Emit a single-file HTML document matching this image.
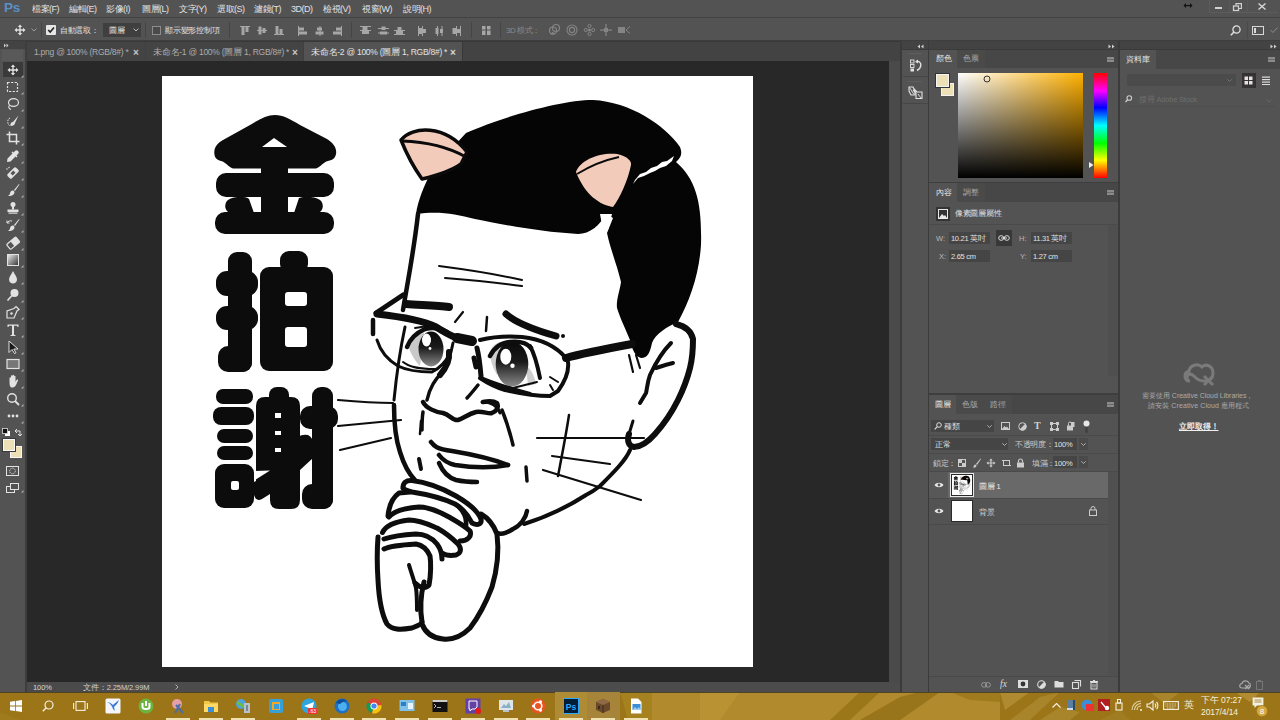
<!DOCTYPE html>
<html><head><meta charset="utf-8">
<style>
*{margin:0;padding:0;box-sizing:border-box}
html,body{width:1280px;height:720px;overflow:hidden;background:#535353;font-family:"Liberation Sans",sans-serif;color:#ddd;position:relative}
.a{position:absolute}
.t{position:absolute;white-space:nowrap;line-height:1}
svg{position:absolute;overflow:visible}
</style></head><body>
<div class="a" style="left:0px;top:0px;width:1280px;height:18px;background:#535353;"></div>
<div class="a" style="left:0px;top:17px;width:1280px;height:1px;background:#434343;"></div>
<div class="a" style="left:0px;top:18px;width:1280px;height:23px;background:#535353;"></div>
<div class="a" style="left:0px;top:40px;width:1280px;height:1px;background:#3e3e3e;"></div>
<div class="a" style="left:0px;top:41px;width:25px;height:651px;background:#535353;"></div>
<div class="a" style="left:0px;top:41px;width:25px;height:8px;background:#434343;"></div>
<div class="a" style="left:2px;top:50px;width:21px;height:11px;background:#595959;"></div>
<div class="a" style="left:25px;top:41px;width:2px;height:651px;background:#3d3d3d;"></div>
<div class="a" style="left:27px;top:41px;width:873px;height:20px;background:#434343;"></div>
<div class="a" style="left:27px;top:41px;width:873px;height:1px;background:#393939;"></div>
<div class="a" style="left:27px;top:61px;width:862px;height:621px;background:#282828;"></div>
<div class="a" style="left:162px;top:76px;width:591px;height:591px;background:#ffffff;"></div>
<div class="a" style="left:889px;top:61px;width:11px;height:621px;background:#4a4a4a;"></div>
<div class="a" style="left:27px;top:682px;width:873px;height:10px;background:#4c4c4c;"></div>
<div class="a" style="left:900px;top:41px;width:2px;height:651px;background:#3b3b3b;"></div>
<div class="a" style="left:902px;top:41px;width:26px;height:651px;background:#535353;"></div>
<div class="a" style="left:902px;top:41px;width:26px;height:9px;background:#434343;"></div>
<div class="a" style="left:902px;top:49px;width:26px;height:1px;background:#3a3a3a;"></div>
<div class="a" style="left:928px;top:41px;width:1px;height:651px;background:#3b3b3b;"></div>
<div class="a" style="left:929px;top:41px;width:190px;height:651px;background:#535353;"></div>
<div class="a" style="left:929px;top:41px;width:190px;height:9px;background:#434343;"></div>
<div class="a" style="left:929px;top:49px;width:190px;height:1px;background:#3a3a3a;"></div>
<div class="a" style="left:1118px;top:41px;width:2px;height:651px;background:#3b3b3b;"></div>
<div class="a" style="left:1120px;top:41px;width:160px;height:651px;background:#535353;"></div>
<div class="a" style="left:1120px;top:41px;width:160px;height:9px;background:#434343;"></div>
<div class="a" style="left:1120px;top:49px;width:160px;height:1px;background:#3a3a3a;"></div>
<span class="t" style="left:4px;top:1px;font-size:13.5px;color:#5a8fc8;font-weight:bold;letter-spacing:-0.3px">Ps</span>
<span class="t" style="left:32px;top:4.5px;font-size:9px;color:#e2e2e2;letter-spacing:-0.5px;">檔案(F)</span>
<span class="t" style="left:69px;top:4.5px;font-size:9px;color:#e2e2e2;letter-spacing:-0.5px;">編輯(E)</span>
<span class="t" style="left:106px;top:4.5px;font-size:9px;color:#e2e2e2;letter-spacing:-0.5px;">影像(I)</span>
<span class="t" style="left:142px;top:4.5px;font-size:9px;color:#e2e2e2;letter-spacing:-0.5px;">圖層(L)</span>
<span class="t" style="left:179px;top:4.5px;font-size:9px;color:#e2e2e2;letter-spacing:-0.5px;">文字(Y)</span>
<span class="t" style="left:217px;top:4.5px;font-size:9px;color:#e2e2e2;letter-spacing:-0.5px;">選取(S)</span>
<span class="t" style="left:254px;top:4.5px;font-size:9px;color:#e2e2e2;letter-spacing:-0.5px;">濾鏡(T)</span>
<span class="t" style="left:291px;top:4.5px;font-size:9px;color:#e2e2e2;letter-spacing:-0.5px;">3D(D)</span>
<span class="t" style="left:323px;top:4.5px;font-size:9px;color:#e2e2e2;letter-spacing:-0.5px;">檢視(V)</span>
<span class="t" style="left:362px;top:4.5px;font-size:9px;color:#e2e2e2;letter-spacing:-0.5px;">視窗(W)</span>
<span class="t" style="left:403px;top:4.5px;font-size:9px;color:#e2e2e2;letter-spacing:-0.5px;">說明(H)</span>
<svg style="left:1183px;top:2px" width="10" height="7" viewBox="0 0 10 7"><path d="M0.5 3.5 L3 1 L3 6 Z M9.5 3.5 L7 1 L7 6 Z" fill="#111"/><rect x="2.5" y="3" width="5" height="1.2" fill="#111"/></svg>
<div class="a" style="left:1209px;top:0px;width:1px;height:13px;background:#5c5c5c;"></div>
<div class="a" style="left:1209px;top:12px;width:69px;height:1px;background:#5c5c5c;"></div>
<div class="a" style="left:1229px;top:0px;width:1px;height:12px;background:#595959;"></div>
<div class="a" style="left:1247px;top:0px;width:1px;height:12px;background:#595959;"></div>
<div class="a" style="left:1215px;top:7px;width:7px;height:2px;background:#d0d0d0;"></div>
<svg style="left:1233px;top:3px" width="9" height="8" viewBox="0 0 9 8"><rect x="0.5" y="3" width="5" height="4.5" fill="none" stroke="#d0d0d0" stroke-width="1.3"/><path d="M3 2.5 V0.6 H8.4 V5.5 H6" fill="none" stroke="#d0d0d0" stroke-width="1.2"/></svg>
<svg style="left:1258px;top:3px" width="8" height="7" viewBox="0 0 8 7"><path d="M0.5 0.5 L7.5 6.5 M7.5 0.5 L0.5 6.5" stroke="#d8d8d8" stroke-width="1.4"/></svg>
<svg style="left:14px;top:24px" width="12" height="12" viewBox="0 0 12 12"><path d="M6 0.5 L8.2 3 L6.7 3 L6.7 5.3 L9 5.3 L9 3.8 L11.5 6 L9 8.2 L9 6.7 L6.7 6.7 L6.7 9 L8.2 9 L6 11.5 L3.8 9 L5.3 9 L5.3 6.7 L3 6.7 L3 8.2 L0.5 6 L3 3.8 L3 5.3 L5.3 5.3 L5.3 3 L3.8 3 Z" fill="#e0e0e0"/></svg>
<svg style="left:31px;top:28px" width="6" height="4" viewBox="0 0 6 4"><path d="M0.5 0.5 L3 3 L5.5 0.5" fill="none" stroke="#9a9a9a" stroke-width="1"/></svg>
<div class="a" style="left:41px;top:22px;width:1px;height:16px;background:#454545;"></div>
<div class="a" style="left:46px;top:25px;width:10px;height:10px;background:#e6e6e6;border-radius:1px"></div>
<svg style="left:47px;top:26px" width="8" height="8" viewBox="0 0 8 8"><path d="M1.2 4 L3.2 6 L7 1.6" fill="none" stroke="#222" stroke-width="1.6"/></svg>
<span class="t" style="left:60px;top:26.5px;font-size:8px;color:#e0e0e0;letter-spacing:-0.3px;">自動選取：</span>
<div class="a" style="left:103px;top:23px;width:38px;height:14px;background:#3f3f3f;"></div>
<span class="t" style="left:109px;top:27px;font-size:8px;color:#e8e8e8;letter-spacing:-0.3px;">圖層</span>
<svg style="left:133px;top:28px" width="6" height="4" viewBox="0 0 6 4"><path d="M0.5 0.5 L3 3 L5.5 0.5" fill="none" stroke="#bbb" stroke-width="1"/></svg>
<div class="a" style="left:145px;top:22px;width:1px;height:16px;background:#454545;"></div>
<div class="a" style="left:152px;top:26px;width:9px;height:9px;background:#4a4a4a;border:1px solid #8c8c8c"></div>
<span class="t" style="left:165px;top:26.5px;font-size:8px;color:#e0e0e0;letter-spacing:-0.2px;">顯示變形控制項</span>
<div class="a" style="left:229px;top:22px;width:1px;height:16px;background:#454545;"></div>
<svg style="left:240px;top:26px" width="10" height="9" viewBox="0 0 10 9"><rect x="0" y="0" width="10" height="1" fill="#a6a6a6"/><rect x="1.5" y="1" width="3" height="8" fill="#a6a6a6"/><rect x="5.5" y="1" width="3" height="5" fill="#a6a6a6"/></svg>
<svg style="left:257px;top:26px" width="10" height="9" viewBox="0 0 10 9"><rect x="0" y="4" width="10" height="1" fill="#a6a6a6"/><rect x="1.5" y="0.5" width="3" height="8" fill="#a6a6a6"/><rect x="5.5" y="2" width="3" height="5" fill="#a6a6a6"/></svg>
<svg style="left:274px;top:26px" width="10" height="9" viewBox="0 0 10 9"><rect x="0" y="8" width="10" height="1" fill="#a6a6a6"/><rect x="1.5" y="0" width="3" height="8" fill="#a6a6a6"/><rect x="5.5" y="3" width="3" height="5" fill="#a6a6a6"/></svg>
<svg style="left:298px;top:26px" width="10" height="9" viewBox="0 0 10 9"><rect x="0" y="0" width="1" height="10" fill="#a6a6a6"/><rect x="1" y="1.5" width="5" height="3" fill="#a6a6a6"/><rect x="1" y="5.5" width="8" height="3" fill="#a6a6a6"/></svg>
<svg style="left:315px;top:26px" width="10" height="9" viewBox="0 0 10 9"><rect x="4.5" y="0" width="1" height="10" fill="#a6a6a6"/><rect x="2" y="1.5" width="5" height="3" fill="#a6a6a6"/><rect x="0.5" y="5.5" width="8" height="3" fill="#a6a6a6"/></svg>
<svg style="left:332px;top:26px" width="10" height="9" viewBox="0 0 10 9"><rect x="9" y="0" width="1" height="10" fill="#a6a6a6"/><rect x="4" y="1.5" width="5" height="3" fill="#a6a6a6"/><rect x="1" y="5.5" width="8" height="3" fill="#a6a6a6"/></svg>
<div class="a" style="left:351px;top:22px;width:1px;height:16px;background:#454545;"></div>
<svg style="left:360px;top:26px" width="11" height="9" viewBox="0 0 11 9"><rect x="0" y="0" width="11" height="1" fill="#a6a6a6"/><rect x="0" y="4" width="11" height="1" fill="#a6a6a6"/><rect x="2.5" y="1" width="5" height="3" fill="#a6a6a6"/><rect x="2" y="5" width="7" height="3" fill="#a6a6a6"/></svg>
<svg style="left:378px;top:26px" width="11" height="9" viewBox="0 0 11 9"><rect x="0" y="2" width="11" height="1" fill="#a6a6a6"/><rect x="0" y="6.5" width="11" height="1" fill="#a6a6a6"/><rect x="3.5" y="0.5" width="4" height="3.5" fill="#a6a6a6"/><rect x="2" y="5.5" width="7" height="3" fill="#a6a6a6"/></svg>
<svg style="left:394px;top:26px" width="11" height="9" viewBox="0 0 11 9"><rect x="0" y="4" width="11" height="1" fill="#a6a6a6"/><rect x="0" y="8" width="11" height="1" fill="#a6a6a6"/><rect x="3.5" y="1" width="4" height="3" fill="#a6a6a6"/><rect x="2" y="5" width="7" height="3" fill="#a6a6a6"/></svg>
<svg style="left:418px;top:26px" width="9" height="10" viewBox="0 0 9 10"><rect x="0" y="0" width="1" height="10" fill="#a6a6a6"/><rect x="4" y="0" width="1" height="10" fill="#a6a6a6"/><rect x="1" y="2" width="3" height="6" fill="#a6a6a6"/><rect x="5" y="3" width="3" height="4" fill="#a6a6a6"/></svg>
<svg style="left:435px;top:26px" width="9" height="10" viewBox="0 0 9 10"><rect x="2" y="0" width="1" height="10" fill="#a6a6a6"/><rect x="6.5" y="0" width="1" height="10" fill="#a6a6a6"/><rect x="0.5" y="2" width="3" height="6" fill="#a6a6a6"/><rect x="5" y="3" width="3" height="4" fill="#a6a6a6"/></svg>
<svg style="left:452px;top:26px" width="9" height="10" viewBox="0 0 9 10"><rect x="4" y="0" width="1" height="10" fill="#a6a6a6"/><rect x="8" y="0" width="1" height="10" fill="#a6a6a6"/><rect x="0.5" y="2" width="3.5" height="6" fill="#a6a6a6"/><rect x="5" y="3" width="3" height="4" fill="#a6a6a6"/></svg>
<div class="a" style="left:471px;top:22px;width:1px;height:16px;background:#454545;"></div>
<svg style="left:482px;top:25px" width="9" height="10" viewBox="0 0 9 10"><rect x="0" y="1" width="3.5" height="9" fill="#a6a6a6"/><rect x="5" y="1" width="3.5" height="9" fill="#a6a6a6"/><rect x="0" y="4.5" width="9" height="1" fill="#535353"/></svg>
<div class="a" style="left:500px;top:22px;width:1px;height:16px;background:#454545;"></div>
<span class="t" style="left:506px;top:27px;font-size:8px;color:#8a8a8a;letter-spacing:-0.4px;">3D 模式：</span>
<svg style="left:548px;top:24px" width="13" height="11" viewBox="0 0 13 11"><circle cx="8" cy="4" r="3.5" fill="none" stroke="#858585" stroke-width="1.2"/><circle cx="5" cy="6.5" r="3.5" fill="none" stroke="#858585" stroke-width="1.2"/><path d="M2 10.5 L5 7.5 L7 10.5Z" fill="#858585"/></svg>
<svg style="left:566px;top:24px" width="12" height="12" viewBox="0 0 12 12"><circle cx="6" cy="6" r="5" fill="none" stroke="#858585" stroke-width="1.1"/><circle cx="6" cy="6" r="2.6" fill="none" stroke="#858585" stroke-width="1.1"/></svg>
<svg style="left:584px;top:24px" width="11" height="12" viewBox="0 0 11 12"><circle cx="5.5" cy="2" r="1.6" fill="none" stroke="#858585"/><circle cx="5.5" cy="10" r="1.6" fill="none" stroke="#858585"/><circle cx="1.8" cy="6" r="1.6" fill="none" stroke="#858585"/><circle cx="9.2" cy="6" r="1.6" fill="none" stroke="#858585"/><circle cx="5.5" cy="6" r="1.5" fill="#858585"/></svg>
<svg style="left:600px;top:24px" width="12" height="12" viewBox="0 0 12 12"><rect x="4" y="4" width="4" height="4" fill="#858585"/><rect x="0" y="5.5" width="12" height="1.2" fill="#858585"/><rect x="5.4" y="0" width="1.2" height="12" fill="#858585"/></svg>
<svg style="left:618px;top:25px" width="12" height="9" viewBox="0 0 12 9"><rect x="0" y="2" width="7" height="6" fill="#858585"/><path d="M8 5 L12 1.5 M8 5 L12 8.5" stroke="#858585" stroke-width="1"/></svg>
<svg style="left:1230px;top:25px" width="11" height="11" viewBox="0 0 11 11"><circle cx="6.5" cy="4.5" r="3.6" fill="none" stroke="#e0e0e0" stroke-width="1.3"/><path d="M4 7 L0.8 10.2" stroke="#e0e0e0" stroke-width="1.6"/></svg>
<div class="a" style="left:1247px;top:22px;width:1px;height:17px;background:#4a4a4a;"></div>
<div class="a" style="left:1252px;top:26px;width:12px;height:9px;background:none;border:1.3px solid #d8d8d8"></div>
<div class="a" style="left:1254px;top:28px;width:2px;height:5px;background:#d8d8d8;"></div>
<svg style="left:1270px;top:27px" width="8" height="6" viewBox="0 0 8 6"><path d="M0.5 3 L3 5.5 L7.5 0.5" fill="none" stroke="#8a8a8a" stroke-width="1"/></svg>
<div class="a" style="left:27px;top:42px;width:118px;height:19px;background:#444444;"></div>
<div class="a" style="left:145px;top:42px;width:1px;height:19px;background:#404040;"></div>
<span class="t" style="left:34px;top:48px;font-size:8.5px;color:#acacac;letter-spacing:-0.25px;">1.png @ 100% (RGB/8#) *</span>
<span class="t" style="left:133px;top:47.5px;font-size:10px;color:#c8c8c8;font-weight:bold">×</span>
<div class="a" style="left:146px;top:42px;width:157px;height:19px;background:#444444;"></div>
<div class="a" style="left:303px;top:42px;width:1px;height:19px;background:#404040;"></div>
<span class="t" style="left:153px;top:48px;font-size:8.5px;color:#acacac;letter-spacing:-0.25px;">未命名-1 @ 100% (圖層 1, RGB/8#) *</span>
<span class="t" style="left:292px;top:47.5px;font-size:10px;color:#c8c8c8;font-weight:bold">×</span>
<div class="a" style="left:304px;top:42px;width:158px;height:19px;background:#535353;"></div>
<span class="t" style="left:311px;top:48px;font-size:8.5px;color:#e4e4e4;letter-spacing:-0.25px;">未命名-2 @ 100% (圖層 1, RGB/8#) *</span>
<span class="t" style="left:450px;top:47.5px;font-size:10px;color:#d8d8d8;font-weight:bold">×</span>
<div class="a" style="left:462px;top:42px;width:1px;height:19px;background:#383838;"></div>
<svg style="left:4px;top:43px" width="5" height="5" viewBox="0 0 5 5"><path d="M0 0.5 L2 2.5 L0 4.5Z M2.5 0.5 L4.5 2.5 L2.5 4.5Z" fill="#cfcfcf"/></svg>
<div class="a" style="left:3px;top:62px;width:20px;height:15px;background:#3a3a3a;"></div>
<svg style="left:5.5px;top:63.0px" width="14" height="14" viewBox="0 0 14 14"><path transform="translate(1,1)" d="M6 0.5 L8.2 3 L6.7 3 L6.7 5.3 L9 5.3 L9 3.8 L11.5 6 L9 8.2 L9 6.7 L6.7 6.7 L6.7 9 L8.2 9 L6 11.5 L3.8 9 L5.3 9 L5.3 6.7 L3 6.7 L3 8.2 L0.5 6 L3 3.8 L3 5.3 L5.3 5.3 L5.3 3 L3.8 3 Z" fill="#e2e2e2"/></svg>
<svg style="left:20.5px;top:74.5px" width="2.5" height="2.5" viewBox="0 0 2.5 2.5"><path d="M2.5 0 L2.5 2.5 L0 2.5Z" fill="#b0b0b0"/></svg>
<svg style="left:5.5px;top:80.0px" width="14" height="14" viewBox="0 0 14 14"><rect x="1.5" y="2.5" width="10" height="9" fill="none" stroke="#e2e2e2" stroke-width="1.2" stroke-dasharray="2.2 1.4"/></svg>
<svg style="left:20.5px;top:91.5px" width="2.5" height="2.5" viewBox="0 0 2.5 2.5"><path d="M2.5 0 L2.5 2.5 L0 2.5Z" fill="#b0b0b0"/></svg>
<svg style="left:5.5px;top:97.0px" width="14" height="14" viewBox="0 0 14 14"><ellipse cx="7.5" cy="5.5" rx="5" ry="3.8" fill="none" stroke="#e2e2e2" stroke-width="1.2"/><path d="M3.5 8 C2 10 3 12 5 12.5" fill="none" stroke="#e2e2e2" stroke-width="1.1"/></svg>
<svg style="left:20.5px;top:108.5px" width="2.5" height="2.5" viewBox="0 0 2.5 2.5"><path d="M2.5 0 L2.5 2.5 L0 2.5Z" fill="#b0b0b0"/></svg>
<svg style="left:5.5px;top:114.0px" width="14" height="14" viewBox="0 0 14 14"><path d="M4 4 C1 5 1 10 4 12" fill="none" stroke="#e2e2e2" stroke-width="1" stroke-dasharray="1.5 1"/><path d="M12.5 1.5 L7 8 C5 8 4 10 4.5 12 C7 12 9 11 9 9 Z" fill="#e2e2e2"/></svg>
<svg style="left:20.5px;top:125.5px" width="2.5" height="2.5" viewBox="0 0 2.5 2.5"><path d="M2.5 0 L2.5 2.5 L0 2.5Z" fill="#b0b0b0"/></svg>
<svg style="left:5.5px;top:131.0px" width="14" height="14" viewBox="0 0 14 14"><path d="M3.5 0.5 V10.5 H13.5 M0.5 3.5 H10.5 V13.5" fill="none" stroke="#e2e2e2" stroke-width="1.5"/></svg>
<svg style="left:20.5px;top:142.5px" width="2.5" height="2.5" viewBox="0 0 2.5 2.5"><path d="M2.5 0 L2.5 2.5 L0 2.5Z" fill="#b0b0b0"/></svg>
<svg style="left:5.5px;top:149.0px" width="14" height="14" viewBox="0 0 14 14"><path d="M12 2 C11 1 10 1 9 2 L7.5 3.5 L6.5 2.5 L5.5 3.5 L6.5 4.5 L1.5 9.5 L1 13 L4.5 12.5 L9.5 7.5 L10.5 8.5 L11.5 7.5 L10.5 6.5 L12 5 C13 4 13 3 12 2Z" fill="#e2e2e2"/></svg>
<svg style="left:20.5px;top:160.5px" width="2.5" height="2.5" viewBox="0 0 2.5 2.5"><path d="M2.5 0 L2.5 2.5 L0 2.5Z" fill="#b0b0b0"/></svg>
<svg style="left:5.5px;top:166.0px" width="14" height="14" viewBox="0 0 14 14"><g transform="rotate(-45 7 7)"><rect x="1" y="4" width="12" height="6" rx="1.5" fill="#e2e2e2"/><rect x="5" y="5.5" width="4" height="3" fill="#535353"/></g><path d="M2 2 L4 1 M1 4 L1 2" stroke="#e2e2e2" stroke-width="0.8"/></svg>
<svg style="left:20.5px;top:177.5px" width="2.5" height="2.5" viewBox="0 0 2.5 2.5"><path d="M2.5 0 L2.5 2.5 L0 2.5Z" fill="#b0b0b0"/></svg>
<svg style="left:5.5px;top:183.0px" width="14" height="14" viewBox="0 0 14 14"><path d="M13 1 L8 7 L9 8 L13.5 1.5Z" fill="#e2e2e2"/><path d="M7.5 7.5 C5.5 7 4 8.5 4 10.5 C3.5 12 2.5 12.5 2 13 C5 13.5 8.5 12 8.5 9 Z" fill="#e2e2e2"/></svg>
<svg style="left:20.5px;top:194.5px" width="2.5" height="2.5" viewBox="0 0 2.5 2.5"><path d="M2.5 0 L2.5 2.5 L0 2.5Z" fill="#b0b0b0"/></svg>
<svg style="left:5.5px;top:201.0px" width="14" height="14" viewBox="0 0 14 14"><circle cx="7" cy="3.5" r="2.5" fill="#e2e2e2"/><rect x="6" y="5" width="2" height="3.5" fill="#e2e2e2"/><rect x="1.5" y="8.5" width="11" height="2.5" fill="#e2e2e2"/><rect x="2.5" y="11.5" width="9" height="1.2" fill="#e2e2e2"/></svg>
<svg style="left:20.5px;top:212.5px" width="2.5" height="2.5" viewBox="0 0 2.5 2.5"><path d="M2.5 0 L2.5 2.5 L0 2.5Z" fill="#b0b0b0"/></svg>
<svg style="left:5.5px;top:218.0px" width="14" height="14" viewBox="0 0 14 14"><path d="M13 1 L8 7 L9 8 L13.5 1.5Z" fill="#e2e2e2"/><path d="M7.5 7.5 C5.5 7 4 8.5 4 10.5 C3.5 12 2.5 12.5 2 13 C5 13.5 8.5 12 8.5 9 Z" fill="#e2e2e2"/><path d="M1 5 C2 3 4 2.5 6 3 M1 5 L1 2.5 M1 5 L3.5 5" fill="none" stroke="#e2e2e2" stroke-width="1"/></svg>
<svg style="left:20.5px;top:229.5px" width="2.5" height="2.5" viewBox="0 0 2.5 2.5"><path d="M2.5 0 L2.5 2.5 L0 2.5Z" fill="#b0b0b0"/></svg>
<svg style="left:5.5px;top:236.0px" width="14" height="14" viewBox="0 0 14 14"><g transform="rotate(-40 7 7)"><rect x="1" y="4" width="12" height="6.5" rx="1" fill="none" stroke="#e2e2e2" stroke-width="1.2"/><rect x="6" y="4" width="7" height="6.5" fill="#e2e2e2"/></g></svg>
<svg style="left:20.5px;top:247.5px" width="2.5" height="2.5" viewBox="0 0 2.5 2.5"><path d="M2.5 0 L2.5 2.5 L0 2.5Z" fill="#b0b0b0"/></svg>
<svg style="left:5.5px;top:253.0px" width="14" height="14" viewBox="0 0 14 14"><defs><linearGradient id="tg" x1="0" y1="0" x2="1" y2="1"><stop offset="0" stop-color="#eee"/><stop offset="1" stop-color="#333"/></linearGradient></defs><rect x="1.5" y="1.5" width="11" height="11" fill="url(#tg)" stroke="#e2e2e2" stroke-width="1"/></svg>
<svg style="left:20.5px;top:264.5px" width="2.5" height="2.5" viewBox="0 0 2.5 2.5"><path d="M2.5 0 L2.5 2.5 L0 2.5Z" fill="#b0b0b0"/></svg>
<svg style="left:5.5px;top:270.0px" width="14" height="14" viewBox="0 0 14 14"><path d="M7 1 C5 5 3 7 3 9.5 C3 12 5 13.5 7 13.5 C9 13.5 11 12 11 9.5 C11 7 9 5 7 1Z" fill="#e2e2e2"/></svg>
<svg style="left:20.5px;top:281.5px" width="2.5" height="2.5" viewBox="0 0 2.5 2.5"><path d="M2.5 0 L2.5 2.5 L0 2.5Z" fill="#b0b0b0"/></svg>
<svg style="left:5.5px;top:288.0px" width="14" height="14" viewBox="0 0 14 14"><circle cx="8.5" cy="5" r="4" fill="#e2e2e2"/><path d="M6 7.5 L1.5 12.5" stroke="#e2e2e2" stroke-width="1.6"/></svg>
<svg style="left:20.5px;top:299.5px" width="2.5" height="2.5" viewBox="0 0 2.5 2.5"><path d="M2.5 0 L2.5 2.5 L0 2.5Z" fill="#b0b0b0"/></svg>
<svg style="left:5.5px;top:305.0px" width="14" height="14" viewBox="0 0 14 14"><path d="M10 1.5 L13 4.5 L11 6 L8 13 L1 13 L1 6 L8 3.5 Z" fill="none" stroke="#e2e2e2" stroke-width="1.2"/><circle cx="5.5" cy="8.5" r="1.2" fill="#e2e2e2"/></svg>
<svg style="left:20.5px;top:316.5px" width="2.5" height="2.5" viewBox="0 0 2.5 2.5"><path d="M2.5 0 L2.5 2.5 L0 2.5Z" fill="#b0b0b0"/></svg>
<svg style="left:5.5px;top:323.0px" width="14" height="14" viewBox="0 0 14 14"><path d="M1.5 1.5 H12.5 V4 H11.5 L11 2.7 H8 V11.8 L9.5 12.2 V13 H4.5 V12.2 L6 11.8 V2.7 H3 L2.5 4 H1.5Z" fill="#e2e2e2"/></svg>
<svg style="left:20.5px;top:334.5px" width="2.5" height="2.5" viewBox="0 0 2.5 2.5"><path d="M2.5 0 L2.5 2.5 L0 2.5Z" fill="#b0b0b0"/></svg>
<svg style="left:5.5px;top:340.0px" width="14" height="14" viewBox="0 0 14 14"><path d="M3 1 L3 12.5 L6 9.5 L8.5 13.5 L10 12.8 L7.8 9 L12 9 Z" fill="#1a1a1a" stroke="#e2e2e2" stroke-width="1"/></svg>
<svg style="left:20.5px;top:351.5px" width="2.5" height="2.5" viewBox="0 0 2.5 2.5"><path d="M2.5 0 L2.5 2.5 L0 2.5Z" fill="#b0b0b0"/></svg>
<svg style="left:5.5px;top:357.0px" width="14" height="14" viewBox="0 0 14 14"><rect x="1" y="2.5" width="12" height="9" fill="#777" stroke="#e2e2e2" stroke-width="1.2"/></svg>
<svg style="left:20.5px;top:368.5px" width="2.5" height="2.5" viewBox="0 0 2.5 2.5"><path d="M2.5 0 L2.5 2.5 L0 2.5Z" fill="#b0b0b0"/></svg>
<svg style="left:5.5px;top:374.0px" width="14" height="14" viewBox="0 0 14 14"><path d="M3.5 8 L3.5 4 C3.5 3 5 3 5 4 L5 7 L5 2 C5 1 6.5 1 6.5 2 L6.5 7 L6.5 1.5 C6.5 0.5 8 0.5 8 1.5 L8 7 L8 2.5 C8 1.5 9.5 1.5 9.5 2.5 L9.5 8 L10.5 6 C11 5 12.5 5.5 12 6.5 L10 11 C9 13 7.5 13.5 6 13.5 C4 13.5 3.5 11.5 3.5 8Z" fill="#e2e2e2"/></svg>
<svg style="left:20.5px;top:385.5px" width="2.5" height="2.5" viewBox="0 0 2.5 2.5"><path d="M2.5 0 L2.5 2.5 L0 2.5Z" fill="#b0b0b0"/></svg>
<svg style="left:5.5px;top:392.0px" width="14" height="14" viewBox="0 0 14 14"><circle cx="6" cy="6" r="4.3" fill="none" stroke="#e2e2e2" stroke-width="1.4"/><path d="M9 9 L13 13" stroke="#e2e2e2" stroke-width="1.8"/></svg>
<svg style="left:20.5px;top:403.5px" width="2.5" height="2.5" viewBox="0 0 2.5 2.5"><path d="M2.5 0 L2.5 2.5 L0 2.5Z" fill="#b0b0b0"/></svg>
<svg style="left:5.5px;top:409.0px" width="14" height="14" viewBox="0 0 14 14"><circle cx="3" cy="7" r="1.4" fill="#e2e2e2"/><circle cx="7" cy="7" r="1.4" fill="#e2e2e2"/><circle cx="11" cy="7" r="1.4" fill="#e2e2e2"/></svg>
<svg style="left:20.5px;top:420.5px" width="2.5" height="2.5" viewBox="0 0 2.5 2.5"><path d="M2.5 0 L2.5 2.5 L0 2.5Z" fill="#b0b0b0"/></svg>
<svg style="left:2px;top:428px" width="8" height="8" viewBox="0 0 8 8"><rect x="3" y="3" width="5" height="5" fill="#fff"/><rect x="0.5" y="0.5" width="5" height="5" fill="#111" stroke="#ddd" stroke-width="0.8"/></svg>
<svg style="left:15px;top:428px" width="7" height="8" viewBox="0 0 7 8"><path d="M1 3 H5 V7.5 M0 3 L2 1 M0 3 L2 5 M5 8 L3 6 M5 8 L7 6" fill="none" stroke="#e2e2e2" stroke-width="1"/></svg>
<div class="a" style="left:10px;top:446px;width:12px;height:12px;background:#ede0b6;border:1px solid #f8f8f8"></div>
<div class="a" style="left:3px;top:439px;width:12px;height:12px;background:#ede0b6;border:1px solid #f8f8f8;box-shadow:0 0 0 1px #3a3a3a"></div>
<svg style="left:6px;top:466px" width="13" height="10" viewBox="0 0 13 10"><rect x="0.5" y="0.5" width="12" height="9" fill="none" stroke="#e2e2e2" stroke-width="1"/><circle cx="6.5" cy="5" r="2.8" fill="none" stroke="#e2e2e2" stroke-width="0.9" stroke-dasharray="1.3 0.8"/></svg>
<svg style="left:6px;top:483px" width="13" height="10" viewBox="0 0 13 10"><rect x="0.5" y="3.5" width="8" height="6" fill="#535353" stroke="#e2e2e2" stroke-width="1"/><rect x="4.5" y="0.5" width="8" height="6" fill="#535353" stroke="#e2e2e2" stroke-width="1"/></svg>
<svg style="left:20.5px;top:489.5px" width="2.5" height="2.5" viewBox="0 0 2.5 2.5"><path d="M2.5 0 L2.5 2.5 L0 2.5Z" fill="#b0b0b0"/></svg>
<div class="a" style="left:27px;top:682px;width:58px;height:10px;background:#4a4a4a;"></div>
<div class="a" style="left:85px;top:682px;width:1px;height:10px;background:#3e3e3e;"></div>
<span class="t" style="left:33px;top:683.5px;font-size:7.5px;color:#d8d8d8;letter-spacing:-0.1px;">100%</span>
<span class="t" style="left:83px;top:683.5px;font-size:7.5px;color:#d0d0d0;letter-spacing:-0.1px;">文件：2.25M/2.99M</span>
<svg style="left:175px;top:684px" width="4" height="6" viewBox="0 0 4 6"><path d="M0.5 0.5 L3 3 L0.5 5.5" fill="none" stroke="#bbb" stroke-width="0.9"/></svg>
<svg style="left:917px;top:44px" width="7" height="5" viewBox="0 0 7 5"><path d="M3 0.5 L0.5 2.5 L3 4.5Z M6.5 0.5 L4 2.5 L6.5 4.5Z" fill="#cfcfcf"/></svg>
<div class="a" style="left:903px;top:50px;width:25px;height:27px;background:#535353;border-bottom:1px solid #464646"></div>
<div class="a" style="left:908px;top:53px;width:14px;height:1px;background:#5e5e5e;"></div>
<svg style="left:910px;top:59px" width="12" height="13" viewBox="0 0 12 13"><rect x="0.5" y="1" width="3.5" height="3" fill="none" stroke="#e2e2e2" stroke-width="0.9"/><rect x="0.5" y="5.5" width="3.5" height="3" fill="none" stroke="#e2e2e2" stroke-width="0.9"/><rect x="0.5" y="9.5" width="3.5" height="3" fill="#e2e2e2"/><path d="M6.5 2.5 C9.5 2 11 4 10.8 6.5 C10.5 9 9 10.5 7 11.5" fill="none" stroke="#e2e2e2" stroke-width="1.4"/><path d="M5 2.8 L8 0.5 L8 4.5Z" fill="#e2e2e2"/></svg>
<div class="a" style="left:903px;top:77px;width:25px;height:27px;background:#535353;border-bottom:1px solid #464646"></div>
<div class="a" style="left:908px;top:81px;width:14px;height:1px;background:#5e5e5e;"></div>
<svg style="left:908px;top:86px" width="15" height="14" viewBox="0 0 15 14"><path d="M1 1 H5 L7 5 V9 L3 9 L1 5Z" fill="none" stroke="#e2e2e2" stroke-width="1.1"/><path d="M1.5 1.5 L6 8.5" stroke="#e2e2e2" stroke-width="0.9"/><path d="M5 4 L8 7 V12.5 H14 V6 H9 L6 3" fill="none" stroke="#e2e2e2" stroke-width="1.1"/><path d="M10 8 L13 12" stroke="#e2e2e2" stroke-width="0.9"/></svg>
<svg style="left:1108px;top:44px" width="7" height="5" viewBox="0 0 7 5"><path d="M0.5 0.5 L3 2.5 L0.5 4.5Z M4 0.5 L6.5 2.5 L4 4.5Z" fill="#cfcfcf"/></svg>
<svg style="left:1270px;top:44px" width="7" height="5" viewBox="0 0 7 5"><path d="M0.5 0.5 L3 2.5 L0.5 4.5Z M4 0.5 L6.5 2.5 L4 4.5Z" fill="#cfcfcf"/></svg>
<div class="a" style="left:929px;top:50px;width:189px;height:18px;background:#474747;"></div>
<div class="a" style="left:929px;top:50px;width:28px;height:18px;background:#535353;"></div>
<div class="a" style="left:957px;top:50px;width:28px;height:18px;background:#4a4a4a;"></div>
<span class="t" style="left:936px;top:55px;font-size:8px;color:#e8e8e8;letter-spacing:-0.2px;">顏色</span>
<span class="t" style="left:963px;top:55px;font-size:8px;color:#a8a8a8;letter-spacing:-0.2px;">色票</span>
<div class="a" style="left:1107px;top:57px;width:7px;height:5px;background:#8a8a8a;"></div>
<div class="a" style="left:1107px;top:59px;width:7px;height:1px;background:#6a6a6a;"></div>
<div class="a" style="left:941px;top:83px;width:13px;height:13px;background:#ede0b6;border:1px solid #f4f4f4"></div>
<div class="a" style="left:936px;top:74px;width:13px;height:13px;background:#ede0b6;border:1px solid #f4f4f4;box-shadow:0 0 0 1px #333"></div>
<div class="a" style="left:958px;top:73px;width:125px;height:105px;background:linear-gradient(to bottom,rgba(0,0,0,0),#000),linear-gradient(to right,#fff,#ffb000)"></div>
<svg style="left:983px;top:75px" width="8" height="8" viewBox="0 0 8 8"><circle cx="4" cy="4" r="3" fill="none" stroke="#333" stroke-width="1"/></svg>
<div class="a" style="left:1094px;top:73px;width:13px;height:105px;background:linear-gradient(to bottom,#ff0000 0%,#ff00ff 17%,#0000ff 33%,#00ffff 50%,#00ff00 67%,#ffff00 83%,#ff0000 100%)"></div>
<svg style="left:1089px;top:162px" width="5" height="6" viewBox="0 0 5 6"><path d="M0 0 L4.5 3 L0 6Z" fill="#f0f0f0"/></svg>
<div class="a" style="left:929px;top:182px;width:189px;height:1px;background:#3e3e3e;"></div>
<div class="a" style="left:929px;top:183px;width:189px;height:19px;background:#474747;"></div>
<div class="a" style="left:929px;top:183px;width:28px;height:19px;background:#535353;"></div>
<div class="a" style="left:957px;top:183px;width:28px;height:19px;background:#4a4a4a;"></div>
<span class="t" style="left:936px;top:189px;font-size:8px;color:#e8e8e8;letter-spacing:-0.2px;">內容</span>
<span class="t" style="left:963px;top:189px;font-size:8px;color:#a8a8a8;letter-spacing:-0.2px;">調整</span>
<div class="a" style="left:1107px;top:190px;width:7px;height:5px;background:#8a8a8a;"></div>
<div class="a" style="left:1107px;top:192px;width:7px;height:1px;background:#6a6a6a;"></div>
<div class="a" style="left:936px;top:207px;width:14px;height:14px;background:#333;"></div>
<svg style="left:938px;top:209px" width="10" height="10" viewBox="0 0 10 10"><rect x="0.5" y="0.5" width="9" height="9" fill="none" stroke="#e8e8e8" stroke-width="1"/><path d="M1 9 L4 5 L6 7 L7 6 L9 9Z" fill="#e8e8e8"/></svg>
<span class="t" style="left:955px;top:210px;font-size:8px;color:#e0e0e0;letter-spacing:-0.3px;">像素圖層屬性</span>
<div class="a" style="left:929px;top:224px;width:189px;height:1px;background:#4a4a4a;"></div>
<div class="a" style="left:1108px;top:225px;width:10px;height:151px;background:#4f4f4f;"></div>
<span class="t" style="left:936px;top:235px;font-size:7.5px;color:#b8b8b8;">W:</span>
<div class="a" style="left:949px;top:232px;width:41px;height:12px;background:#454545;"></div>
<span class="t" style="left:951px;top:234.5px;font-size:7.5px;color:#e0e0e0;letter-spacing:-0.3px;">10.21 英吋</span>
<div class="a" style="left:996px;top:230px;width:16px;height:16px;background:#383838;"></div>
<svg style="left:998px;top:235px" width="12" height="6" viewBox="0 0 12 6"><rect x="0.7" y="0.7" width="5" height="4.6" rx="2.3" fill="none" stroke="#ddd" stroke-width="1"/><rect x="6.3" y="0.7" width="5" height="4.6" rx="2.3" fill="none" stroke="#ddd" stroke-width="1"/><rect x="3" y="2.5" width="6" height="1" fill="#ddd"/></svg>
<span class="t" style="left:1019px;top:235px;font-size:7.5px;color:#b8b8b8;">H:</span>
<div class="a" style="left:1031px;top:232px;width:41px;height:12px;background:#454545;"></div>
<span class="t" style="left:1033px;top:234.5px;font-size:7.5px;color:#e0e0e0;letter-spacing:-0.3px;">11.31 英吋</span>
<span class="t" style="left:939px;top:252.5px;font-size:7.5px;color:#b8b8b8;">X:</span>
<div class="a" style="left:949px;top:250px;width:41px;height:12px;background:#454545;"></div>
<span class="t" style="left:951px;top:252.5px;font-size:7.5px;color:#e0e0e0;letter-spacing:-0.3px;">2.65 cm</span>
<span class="t" style="left:1020px;top:252.5px;font-size:7.5px;color:#b8b8b8;">Y:</span>
<div class="a" style="left:1031px;top:250px;width:41px;height:12px;background:#454545;"></div>
<span class="t" style="left:1033px;top:252.5px;font-size:7.5px;color:#e0e0e0;letter-spacing:-0.3px;">1.27 cm</span>
<div class="a" style="left:929px;top:393px;width:189px;height:2px;background:#3e3e3e;"></div>
<div class="a" style="left:929px;top:395px;width:189px;height:19px;background:#474747;"></div>
<div class="a" style="left:929px;top:395px;width:27px;height:19px;background:#535353;"></div>
<div class="a" style="left:956px;top:395px;width:28px;height:19px;background:#4a4a4a;"></div>
<div class="a" style="left:984px;top:395px;width:28px;height:19px;background:#4a4a4a;"></div>
<span class="t" style="left:935px;top:401px;font-size:8px;color:#e8e8e8;letter-spacing:-0.2px;">圖層</span>
<span class="t" style="left:962px;top:401px;font-size:8px;color:#a8a8a8;letter-spacing:-0.2px;">色版</span>
<span class="t" style="left:990px;top:401px;font-size:8px;color:#a8a8a8;letter-spacing:-0.2px;">路徑</span>
<div class="a" style="left:1107px;top:402px;width:7px;height:5px;background:#8a8a8a;"></div>
<div class="a" style="left:1107px;top:404px;width:7px;height:1px;background:#6a6a6a;"></div>
<div class="a" style="left:931px;top:420px;width:63px;height:12px;background:#454545;"></div>
<svg style="left:934px;top:422px" width="8" height="8" viewBox="0 0 8 8"><circle cx="5" cy="3" r="2.3" fill="none" stroke="#ddd" stroke-width="1"/><path d="M3.3 4.7 L0.7 7.3" stroke="#ddd" stroke-width="1.2"/></svg>
<span class="t" style="left:944px;top:423px;font-size:7.5px;color:#e0e0e0;letter-spacing:-0.2px;">種類</span>
<svg style="left:987px;top:425px" width="5" height="3" viewBox="0 0 5 3"><path d="M0.3 0.3 L2.5 2.5 L4.7 0.3" fill="none" stroke="#bbb" stroke-width="0.9"/></svg>
<svg style="left:1001px;top:422px" width="9" height="8" viewBox="0 0 9 8"><rect x="0.5" y="0.5" width="8" height="7" fill="none" stroke="#ccc" stroke-width="1"/><path d="M1 7 L3.5 4 L5 5.5 L6 4.5 L8 7Z" fill="#ccc"/></svg>
<svg style="left:1018px;top:422px" width="9" height="9" viewBox="0 0 9 9"><circle cx="4.5" cy="4.5" r="3.8" fill="none" stroke="#ccc" stroke-width="1"/><path d="M4.5 0.7 A3.8 3.8 0 0 1 4.5 8.3Z" fill="#ccc" transform="rotate(45 4.5 4.5)"/></svg>
<span class="t" style="left:1034px;top:421px;font-size:10px;color:#d0d0d0;font-family:&quot;Liberation Serif&quot;,serif;font-weight:bold">T</span>
<svg style="left:1050px;top:422px" width="9" height="9" viewBox="0 0 9 9"><rect x="1.5" y="1.5" width="6" height="6" fill="none" stroke="#ccc" stroke-width="1"/><rect x="0" y="0" width="3" height="3" fill="#ccc"/><rect x="6" y="0" width="3" height="3" fill="#ccc"/><rect x="0" y="6" width="3" height="3" fill="#ccc"/><rect x="6" y="6" width="3" height="3" fill="#ccc"/></svg>
<svg style="left:1066px;top:421px" width="9" height="10" viewBox="0 0 9 10"><rect x="1" y="4.5" width="6" height="5" fill="#ccc"/><path d="M2.5 4.5 V2.5 A1.5 1.5 0 0 1 5.5 2.5 V4.5" fill="none" stroke="#ccc" stroke-width="1"/><rect x="5" y="1" width="3.5" height="5" fill="#ccc"/></svg>
<svg style="left:1082px;top:420px" width="9" height="14" viewBox="0 0 9 14"><circle cx="4.5" cy="3.5" r="3" fill="#e6e6e6"/><rect x="3.5" y="7" width="2" height="6" rx="1" fill="#3a3a3a"/></svg>
<div class="a" style="left:929px;top:435px;width:189px;height:1px;background:#4a4a4a;"></div>
<div class="a" style="left:931px;top:438px;width:77px;height:12px;background:#454545;"></div>
<span class="t" style="left:935px;top:441px;font-size:7.5px;color:#e0e0e0;letter-spacing:-0.2px;">正常</span>
<svg style="left:1002px;top:443px" width="5" height="3" viewBox="0 0 5 3"><path d="M0.3 0.3 L2.5 2.5 L4.7 0.3" fill="none" stroke="#bbb" stroke-width="0.9"/></svg>
<span class="t" style="left:1015px;top:441px;font-size:7.5px;color:#c8c8c8;letter-spacing:-0.3px;">不透明度：</span>
<div class="a" style="left:1053px;top:438px;width:24px;height:12px;background:#454545;"></div>
<span class="t" style="left:1054px;top:441px;font-size:7.5px;color:#e0e0e0;letter-spacing:-0.2px;">100%</span>
<div class="a" style="left:1079px;top:438px;width:9px;height:12px;background:#4a4a4a;"></div>
<svg style="left:1081px;top:443px" width="5" height="3" viewBox="0 0 5 3"><path d="M0.3 0.3 L2.5 2.5 L4.7 0.3" fill="none" stroke="#bbb" stroke-width="0.9"/></svg>
<div class="a" style="left:929px;top:453px;width:189px;height:1px;background:#4a4a4a;"></div>
<span class="t" style="left:933px;top:459.5px;font-size:7.5px;color:#c8c8c8;letter-spacing:-0.3px;">鎖定：</span>
<svg style="left:958px;top:459px" width="8" height="8" viewBox="0 0 8 8"><rect x="0.5" y="0.5" width="7" height="7" fill="none" stroke="#ccc"/><rect x="1" y="1" width="3" height="3" fill="#ccc"/><rect x="4" y="4" width="3" height="3" fill="#ccc"/></svg>
<svg style="left:972px;top:458px" width="9" height="10" viewBox="0 0 9 10"><path d="M8.5 0.5 L4 6 L5 7 L9 1Z" fill="#ccc"/><path d="M3.5 6.5 C2 6.5 1.5 8 1.5 9.5 L0.5 9.5 C2 10 4.5 9.5 4.5 7.5Z" fill="#ccc"/></svg>
<svg style="left:986px;top:458px" width="10" height="10" viewBox="0 0 10 10"><path transform="scale(0.83)" d="M6 0.5 L8.2 3 L6.7 3 L6.7 5.3 L9 5.3 L9 3.8 L11.5 6 L9 8.2 L9 6.7 L6.7 6.7 L6.7 9 L8.2 9 L6 11.5 L3.8 9 L5.3 9 L5.3 6.7 L3 6.7 L3 8.2 L0.5 6 L3 3.8 L3 5.3 L5.3 5.3 L5.3 3 L3.8 3 Z" fill="#ccc"/></svg>
<svg style="left:1002px;top:459px" width="9" height="8" viewBox="0 0 9 8"><rect x="1.5" y="1.5" width="6" height="5" fill="none" stroke="#ccc" stroke-width="1"/><path d="M0 1.5 H2 M7 6.5 H9" stroke="#ccc"/></svg>
<svg style="left:1016px;top:458px" width="9" height="10" viewBox="0 0 9 10"><rect x="1" y="4.5" width="7" height="5" fill="#ccc"/><path d="M2.5 4.5 V3 A2 2 0 0 1 6.5 3 V4.5" fill="none" stroke="#ccc" stroke-width="1.2"/></svg>
<span class="t" style="left:1032px;top:459.5px;font-size:7.5px;color:#c8c8c8;letter-spacing:-0.3px;">填滿：</span>
<div class="a" style="left:1053px;top:456px;width:24px;height:12px;background:#454545;"></div>
<span class="t" style="left:1054px;top:459.5px;font-size:7.5px;color:#e0e0e0;letter-spacing:-0.2px;">100%</span>
<div class="a" style="left:1079px;top:456px;width:9px;height:12px;background:#4a4a4a;"></div>
<svg style="left:1081px;top:461px" width="5" height="3" viewBox="0 0 5 3"><path d="M0.3 0.3 L2.5 2.5 L4.7 0.3" fill="none" stroke="#bbb" stroke-width="0.9"/></svg>
<div class="a" style="left:929px;top:471px;width:189px;height:1px;background:#4a4a4a;"></div>
<div class="a" style="left:929px;top:472px;width:19px;height:26px;background:#585858;"></div>
<div class="a" style="left:948px;top:472px;width:160px;height:26px;background:#696969;"></div>
<div class="a" style="left:929px;top:498px;width:180px;height:1px;background:#4a4a4a;"></div>
<svg style="left:934px;top:482px" width="10" height="6" viewBox="0 0 10 6"><path d="M0.5 3 C2.5 0 7.5 0 9.5 3 C7.5 6 2.5 6 0.5 3Z" fill="#e8e8e8"/><circle cx="5" cy="3" r="1.4" fill="#585858"/></svg>
<div class="a" style="left:950px;top:473px;width:24px;height:24px;background:#2a2a2a;border:1px solid #e8e8e8"></div>
<svg style="left:952px;top:475px" width="20" height="20" viewBox="162 76 591 591"><rect x="162" y="76" width="591" height="591" fill="#fff"/><use href="#art"/></svg>
<span class="t" style="left:979px;top:483px;font-size:7.5px;color:#ececec;letter-spacing:-0.2px;">圖層 1</span>
<svg style="left:934px;top:508px" width="10" height="6" viewBox="0 0 10 6"><path d="M0.5 3 C2.5 0 7.5 0 9.5 3 C7.5 6 2.5 6 0.5 3Z" fill="#e8e8e8"/><circle cx="5" cy="3" r="1.4" fill="#535353"/></svg>
<div class="a" style="left:951px;top:500px;width:22px;height:22px;background:#ffffff;border:1px solid #2a2a2a"></div>
<span class="t" style="left:979px;top:509px;font-size:7.5px;color:#d8d8d8;letter-spacing:-0.2px;">背景</span>
<svg style="left:1089px;top:506px" width="8" height="10" viewBox="0 0 8 10"><rect x="0.5" y="4" width="7" height="5.5" fill="none" stroke="#ccc" stroke-width="1"/><path d="M2 4 V2.5 A2 2 0 0 1 6 2.5 V4" fill="none" stroke="#ccc" stroke-width="1"/></svg>
<div class="a" style="left:929px;top:524px;width:180px;height:1px;background:#4a4a4a;"></div>
<div class="a" style="left:1108px;top:472px;width:10px;height:204px;background:#505050;"></div>
<div class="a" style="left:929px;top:676px;width:189px;height:1px;background:#494949;"></div>
<svg style="left:981px;top:682px" width="10" height="6" viewBox="0 0 10 6"><rect x="0.6" y="0.6" width="5" height="4.5" rx="2.2" fill="none" stroke="#999" stroke-width="1"/><rect x="4.4" y="0.6" width="5" height="4.5" rx="2.2" fill="none" stroke="#999" stroke-width="1"/></svg>
<span class="t" style="left:1000px;top:679.5px;font-size:9.5px;color:#d8d8d8;font-style:italic;font-family:&quot;Liberation Serif&quot;,serif">fx</span>
<svg style="left:1018px;top:680px" width="10" height="9" viewBox="0 0 10 9"><rect x="0" y="0" width="10" height="8" fill="#ddd"/><circle cx="5" cy="4" r="2.4" fill="#333"/></svg>
<svg style="left:1037px;top:680px" width="9" height="9" viewBox="0 0 9 9"><circle cx="4.5" cy="4.5" r="3.8" fill="none" stroke="#ddd" stroke-width="1.1"/><path d="M1.8 7.2 L7.2 1.8 A3.8 3.8 0 0 1 1.8 7.2Z" fill="#ddd"/></svg>
<svg style="left:1054px;top:680px" width="10" height="8" viewBox="0 0 10 8"><path d="M0.5 1 H4 L5 2 H9.5 V7.5 H0.5Z" fill="#ddd"/></svg>
<svg style="left:1072px;top:680px" width="9" height="9" viewBox="0 0 9 9"><rect x="0.5" y="2.5" width="6" height="6" fill="none" stroke="#ddd" stroke-width="1.1"/><path d="M2.5 0.5 H8.5 V6.5" fill="none" stroke="#ddd" stroke-width="1.1"/></svg>
<svg style="left:1090px;top:680px" width="8" height="9" viewBox="0 0 8 9"><rect x="0" y="1" width="8" height="1.2" fill="#ddd"/><rect x="3" y="0" width="2" height="1" fill="#ddd"/><rect x="1" y="2.5" width="6" height="6.5" fill="none" stroke="#ddd" stroke-width="1"/><path d="M3 4 V7.5 M5 4 V7.5" stroke="#ddd" stroke-width="0.8"/></svg>
<div class="a" style="left:1120px;top:50px;width:160px;height:19px;background:#474747;"></div>
<div class="a" style="left:1120px;top:50px;width:36px;height:19px;background:#535353;"></div>
<span class="t" style="left:1126px;top:56px;font-size:8px;color:#e8e8e8;letter-spacing:-0.2px;">資料庫</span>
<div class="a" style="left:1268px;top:57px;width:7px;height:5px;background:#8a8a8a;"></div>
<div class="a" style="left:1268px;top:59px;width:7px;height:1px;background:#6a6a6a;"></div>
<div class="a" style="left:1127px;top:74px;width:109px;height:12px;background:#4b4b4b;"></div>
<svg style="left:1227px;top:79px" width="5" height="3" viewBox="0 0 5 3"><path d="M0.3 0.3 L2.5 2.5 L4.7 0.3" fill="none" stroke="#777" stroke-width="0.9"/></svg>
<div class="a" style="left:1242px;top:73px;width:14px;height:15px;background:#333;"></div>
<svg style="left:1244px;top:76px" width="9" height="9" viewBox="0 0 9 9"><rect x="0.5" y="0.5" width="3.5" height="3.5" fill="#e8e0e0"/><rect x="5" y="0.5" width="3.5" height="3.5" fill="#e8e0e0"/><rect x="0.5" y="5" width="3.5" height="3.5" fill="#e8e0e0"/><rect x="5" y="5" width="3.5" height="3.5" fill="#e8e0e0"/></svg>
<svg style="left:1262px;top:76px" width="8" height="9" viewBox="0 0 8 9"><rect x="0" y="0.5" width="8" height="1.2" fill="#ddd"/><rect x="0" y="3" width="8" height="1.2" fill="#ddd"/><rect x="0" y="5.5" width="8" height="1.2" fill="#ddd"/><rect x="0" y="8" width="8" height="1" fill="#ddd"/></svg>
<svg style="left:1125px;top:95px" width="7" height="8" viewBox="0 0 7 8"><circle cx="4.3" cy="3" r="2.3" fill="none" stroke="#ccc" stroke-width="1.1"/><path d="M2.6 4.7 L0.5 7" stroke="#ccc" stroke-width="1.3"/></svg>
<span class="t" style="left:1139px;top:96px;font-size:7.5px;color:#6e6e6e;letter-spacing:-0.2px;">搜尋 Adobe Stock</span>
<svg style="left:1266px;top:99px" width="6" height="4" viewBox="0 0 6 4"><path d="M0.3 0.3 L3 3 L5.7 0.3" fill="none" stroke="#666" stroke-width="0.9"/></svg>
<div class="a" style="left:1127px;top:106px;width:148px;height:1px;background:#4d4d4d;"></div>
<svg style="left:1182px;top:361px" width="34" height="26" viewBox="0 0 34 26"><path d="M8 20 C2 20 1 12 7 10 C8 4 16 2 20 6 C24 2 31 5 31 12 C31 18 27 20 23 20 M8 20 C4 20 4 14 8 13 C10 13 12 15 14 17 C16 19 18 20 23 20" fill="none" stroke="#7a7a7a" stroke-width="3"/><path d="M22 15 L31 24 M31 15 L22 24" stroke="#7a7a7a" stroke-width="3"/></svg>
<span class="t" style="left:1142px;top:391.5px;font-size:7px;color:#ababab;letter-spacing:-0.02px;">需要使用 Creative Cloud Libraries，</span>
<span class="t" style="left:1148px;top:402px;font-size:7px;color:#ababab;letter-spacing:0.1px;">請安裝 Creative Cloud 應用程式</span>
<span class="t" style="left:1179px;top:422.5px;font-size:8px;color:#f0f0f0;letter-spacing:-0.1px;font-weight:bold;text-decoration:underline">立即取得！</span>
<svg style="left:1239px;top:680px" width="12" height="9" viewBox="0 0 12 9"><path d="M3 8 C0 8 0 4 3 3.5 C4 0 9 0 10 3 C12 3.5 12 8 9 8Z" fill="none" stroke="#aaa" stroke-width="1.2"/><path d="M6 5 L10 9 M10 5 L6 9" stroke="#aaa" stroke-width="1.2"/></svg>
<svg style="left:1256px;top:680px" width="7" height="10" viewBox="0 0 7 10"><rect x="0.5" y="1.5" width="6" height="8" fill="none" stroke="#777" stroke-width="1"/><rect x="2" y="0" width="3" height="1.5" fill="#777"/></svg>
<svg style="left:0px;top:692px" width="1280" height="28" viewBox="0 0 1280 28">
<rect width="1280" height="28" fill="#9b7518"/>
<path d="M652 0 L1000 0 L1000 28 L652 28Z" fill="#b08a2c"/><path d="M620 0 L652 0 L652 28 L628 28Z" fill="#a5821f"/>
<path d="M700 0 L740 0 L720 28 L700 28Z" fill="#b89233"/>
<path d="M830 28 L860 0 L880 0 L850 28Z" fill="#9c771a"/>
<path d="M860 28 L900 5 L920 0 L940 0 L900 28Z" fill="#98741a"/>
<path d="M950 0 L1000 0 L1000 10 L970 8Z" fill="#a07b1e"/>
<path d="M1010 28 L1040 5 L1060 0 L1030 28Z" fill="#a8842a"/>
<path d="M1000 0 L1030 0 L1005 18Z" fill="#b08a30"/>
<path d="M1040 28 L1060 15 L1080 20 L1070 28Z" fill="#a8842a"/>
<path d="M1150 0 L1180 0 L1165 12Z" fill="#a8842a"/>
<path d="M1100 28 L1120 18 L1130 28Z" fill="#a07c22"/>
<path d="M1235 0 L1260 0 L1250 10Z" fill="#b08c32"/>
<path d="M0 20 L20 28 L0 28Z" fill="#a07b1e"/>
<rect width="1280" height="1" fill="#4e4424"/>
</svg>
<div class="a" style="left:555px;top:692px;width:32px;height:28px;background:#ae8b35;"></div>
<div class="a" style="left:587px;top:692px;width:33px;height:28px;background:#a6843a;"></div>
<div class="a" style="left:166px;top:718px;width:24px;height:2px;background:#f0e2b0;"></div>
<div class="a" style="left:199px;top:718px;width:24px;height:2px;background:#f0e2b0;"></div>
<div class="a" style="left:231px;top:718px;width:24px;height:2px;background:#f0e2b0;"></div>
<div class="a" style="left:297px;top:718px;width:24px;height:2px;background:#f0e2b0;"></div>
<div class="a" style="left:330px;top:718px;width:24px;height:2px;background:#f0e2b0;"></div>
<div class="a" style="left:362px;top:718px;width:24px;height:2px;background:#f0e2b0;"></div>
<div class="a" style="left:395px;top:718px;width:24px;height:2px;background:#f0e2b0;"></div>
<div class="a" style="left:428px;top:718px;width:24px;height:2px;background:#f0e2b0;"></div>
<div class="a" style="left:461px;top:718px;width:24px;height:2px;background:#f0e2b0;"></div>
<div class="a" style="left:494px;top:718px;width:24px;height:2px;background:#f0e2b0;"></div>
<div class="a" style="left:526px;top:718px;width:24px;height:2px;background:#f0e2b0;"></div>
<div class="a" style="left:559px;top:718px;width:24px;height:2px;background:#f0e2b0;"></div>
<div class="a" style="left:591px;top:718px;width:24px;height:2px;background:#f0e2b0;"></div>
<div class="a" style="left:624px;top:718px;width:24px;height:2px;background:#f0e2b0;"></div>
<svg style="left:10px;top:700px" width="12" height="12" viewBox="0 0 12 12"><path d="M0 1.7 L5 1 V5.6 H0Z M5.8 0.9 L12 0 V5.6 H5.8Z M0 6.4 H5 V11 L0 10.3Z M5.8 6.4 H12 V12 L5.8 11.1Z" fill="#fff"/></svg>
<svg style="left:42px;top:700px" width="12" height="12" viewBox="0 0 12 12"><circle cx="7" cy="5" r="4" fill="none" stroke="#f4f0e0" stroke-width="1.2"/><path d="M4.2 7.8 L0.8 11.2" stroke="#f4f0e0" stroke-width="1.4"/></svg>
<svg style="left:73px;top:701px" width="15" height="10" viewBox="0 0 15 10"><rect x="3" y="0.6" width="9" height="8.8" fill="none" stroke="#f4f0e0" stroke-width="1.1"/><path d="M0.6 2 V8 M14.4 2 V8" stroke="#f4f0e0" stroke-width="1.1"/></svg>
<svg style="left:105.0px;top:698px" width="16" height="16" viewBox="0 0 16 16"><rect x="0.5" y="0.5" width="15" height="15" rx="1.5" fill="#f4f6fb"/><path d="M2 4 C5 5 7 8 8 11 L10 13 L9 9 C11 7 13 5 14 2 C11 4 9 6 8 7 C6 5 4 4 2 4Z" fill="#3a7bd5"/></svg>
<svg style="left:138.0px;top:698px" width="16" height="16" viewBox="0 0 16 16"><circle cx="8" cy="8" r="7.5" fill="#6db33f"/><path d="M4.5 5 V9 C4.5 11.5 11.5 11.5 11.5 9 V5" fill="none" stroke="#fff" stroke-width="2"/><path d="M8 3 V8" stroke="#fff" stroke-width="2"/></svg>
<svg style="left:170.0px;top:698px" width="16" height="16" viewBox="0 0 16 16"><circle cx="7" cy="6" r="5" fill="#e6a0a8"/><path d="M6 7 L13 15 M10 6 L5 15" stroke="#4a6da8" stroke-width="2"/></svg>
<svg style="left:203.0px;top:698px" width="16" height="16" viewBox="0 0 16 16"><path d="M1 3 H6 L7.5 4.5 H15 V14 H1Z" fill="#f3c746"/><rect x="1" y="6" width="14" height="8" fill="#ffd865"/><rect x="5" y="9" width="6" height="5" fill="#3b8ed8"/></svg>
<svg style="left:235.0px;top:698px" width="16" height="16" viewBox="0 0 16 16"><circle cx="6" cy="6" r="5" fill="#4ea3db"/><path d="M2 4 L9 9" stroke="#6fbf3a" stroke-width="2.5"/><rect x="9" y="5" width="6" height="10" fill="#b8c2cc"/><rect x="11" y="7" width="2" height="6" fill="#7b8794"/></svg>
<svg style="left:268.0px;top:698px" width="16" height="16" viewBox="0 0 16 16"><rect x="1" y="1" width="14" height="14" rx="2" fill="#37a0d8"/><rect x="4" y="4" width="8" height="8" fill="#f5a623"/><rect x="6" y="6" width="5" height="5" fill="#37a0d8"/></svg>
<svg style="left:301.0px;top:698px" width="16" height="16" viewBox="0 0 16 16"><circle cx="8" cy="8" r="7.5" fill="#2ea5de"/><path d="M3 8 L13 4 L11 13 L8 10 Z" fill="#fff"/><rect x="7" y="10" width="9" height="6" rx="1" fill="#e33"/><text x="11.5" y="15" font-size="5" fill="#fff" text-anchor="middle" font-family="Liberation Sans">.63</text></svg>
<svg style="left:334.0px;top:698px" width="16" height="16" viewBox="0 0 16 16"><circle cx="8" cy="8" r="7.5" fill="#1f6fc4"/><circle cx="8.5" cy="8.5" r="4.5" fill="#4ab0f0"/><path d="M2 5 C4 1 10 0 13 3 C10 3 8 4 6 6Z" fill="#0d4c9a"/></svg>
<svg style="left:366.0px;top:698px" width="16" height="16" viewBox="0 0 16 16"><circle cx="8" cy="8" r="7.5" fill="#db4437"/><path d="M8 8 L1.5 4.2 A7.5 7.5 0 0 0 6 15.3Z" fill="#0f9d58"/><path d="M8 8 L6 15.3 A7.5 7.5 0 0 0 15.5 7Z" fill="#f4c20d"/><circle cx="8" cy="8" r="3.5" fill="#fff"/><circle cx="8" cy="8" r="2.6" fill="#4285f4"/></svg>
<svg style="left:399.0px;top:698px" width="16" height="16" viewBox="0 0 16 16"><rect x="0.5" y="2" width="15" height="11" fill="#7fc1e8"/><rect x="2" y="4" width="5" height="4" fill="#2d7fc4"/><rect x="9" y="5" width="5" height="6" fill="#e8f4fb"/></svg>
<svg style="left:432.0px;top:698px" width="16" height="16" viewBox="0 0 16 16"><rect x="0.5" y="2" width="15" height="12" fill="#111"/><rect x="0.5" y="2" width="15" height="2" fill="#ccc"/><path d="M2 6 L4 8 L2 10" stroke="#ddd" stroke-width="0.8" fill="none"/><rect x="5" y="9" width="4" height="0.8" fill="#ddd"/></svg>
<svg style="left:465.0px;top:698px" width="16" height="16" viewBox="0 0 16 16"><rect x="0.5" y="0.5" width="15" height="15" fill="#6441a4"/><path d="M4 3 H12 V9 L10 11 H7 L5 13 V11 H4Z" fill="none" stroke="#fff" stroke-width="1"/><circle cx="13" cy="13" r="3" fill="#e91916"/></svg>
<svg style="left:498.0px;top:698px" width="16" height="16" viewBox="0 0 16 16"><rect x="1" y="2" width="14" height="10" fill="#dfe6ea"/><path d="M3 10 L6 6 L8 8 L11 4 L13 10Z" fill="#8ab0c8"/><rect x="5" y="12" width="6" height="2" fill="#b8c2cc"/></svg>
<svg style="left:530.0px;top:698px" width="16" height="16" viewBox="0 0 16 16"><circle cx="8" cy="8" r="7.5" fill="#e95420"/><circle cx="8" cy="8" r="3.8" fill="none" stroke="#fff" stroke-width="1.6"/><circle cx="3.5" cy="8" r="1.5" fill="#fff"/><circle cx="10.5" cy="3.8" r="1.5" fill="#fff"/><circle cx="10.5" cy="12.2" r="1.5" fill="#fff"/></svg>
<svg style="left:563.0px;top:698px" width="16" height="16" viewBox="0 0 16 16"><rect x="0.5" y="0.5" width="15" height="15" fill="#001e36" stroke="#31a8ff" stroke-width="1"/><text x="8" y="11.5" font-size="8.5" fill="#31a8ff" text-anchor="middle" font-family="Liberation Sans" font-weight="bold">Ps</text></svg>
<svg style="left:595.0px;top:698px" width="16" height="16" viewBox="0 0 16 16"><path d="M8 1 L15 4 V12 L8 15 L1 12 V4Z" fill="#6b4a2c"/><path d="M1 4 L8 7 L15 4 L8 1Z" fill="#8f6a44"/><path d="M8 7 V15" stroke="#3c2a18" stroke-width="1"/><rect x="3" y="8" width="2" height="3" fill="#3c2a18"/></svg>
<svg style="left:628.0px;top:698px" width="16" height="16" viewBox="0 0 16 16"><path d="M3 0.5 H10 L13.5 4 V15.5 H3Z" fill="#fff"/><rect x="4.5" y="6" width="8" height="6" fill="#3b8ed8"/><path d="M4.5 12 L7 9 L9 11 L11 9 L12.5 12Z" fill="#9fd0f5"/></svg>
<svg style="left:1052px;top:702px" width="9" height="6" viewBox="0 0 9 6"><path d="M0.5 5.5 L4.5 1.5 L8.5 5.5" fill="none" stroke="#f4f0e0" stroke-width="1.2"/></svg>
<svg style="left:1066px;top:699px" width="10" height="12" viewBox="0 0 10 12"><rect x="1" y="1" width="8" height="10" fill="#5a7fa0"/><rect x="1" y="9" width="8" height="2" fill="#cde"/><rect x="7" y="1" width="2" height="10" fill="#2a4a66"/></svg>
<svg style="left:1081px;top:699px" width="13" height="13" viewBox="0 0 13 13"><circle cx="6" cy="6" r="5.5" fill="#3b8ed8"/><rect x="5" y="5" width="8" height="7" fill="#e33"/></svg>
<svg style="left:1098px;top:699px" width="12" height="12" viewBox="0 0 12 12"><rect x="0" y="0" width="12" height="12" fill="#b01e24"/><path d="M3 3 L8 9" stroke="#fff" stroke-width="1.2"/><circle cx="9" cy="9" r="2.2" fill="#fff"/></svg>
<svg style="left:1115px;top:699px" width="9" height="12" viewBox="0 0 9 12"><rect x="1" y="4" width="6" height="7" fill="none" stroke="#f4f0e0" stroke-width="1.1"/><rect x="2.5" y="0.5" width="3" height="3.5" fill="none" stroke="#f4f0e0" stroke-width="1"/></svg>
<svg style="left:1131px;top:700px" width="12" height="11" viewBox="0 0 12 11"><path d="M1 10 A9 9 0 0 1 10 1 M3.5 10 A6.5 6.5 0 0 1 10 3.5 M6 10 A4 4 0 0 1 10 6" fill="none" stroke="#e8d8a8" stroke-width="1.1"/><circle cx="10" cy="10" r="1" fill="#f4f0e0"/></svg>
<svg style="left:1146px;top:700px" width="13" height="11" viewBox="0 0 13 11"><path d="M1 4 H3.5 L7 1 V10 L3.5 7 H1Z" fill="none" stroke="#f4f0e0" stroke-width="1.1"/><path d="M9 3.5 A3 3 0 0 1 9 7.5 M10.5 2 A5 5 0 0 1 10.5 9" fill="none" stroke="#f4f0e0" stroke-width="1.1"/></svg>
<svg style="left:1163px;top:701px" width="16" height="9" viewBox="0 0 16 9"><rect x="0.6" y="0.6" width="14.8" height="7.8" fill="none" stroke="#f4f0e0" stroke-width="1.1"/><path d="M2.5 3 H13.5 M2.5 5 H13.5 M4 7 H12" stroke="#f4f0e0" stroke-width="0.8" stroke-dasharray="1 0.6"/></svg>
<span class="t" style="left:1184px;top:700px;font-size:10px;color:#f2ecd8;">英</span>
<span class="t" style="left:1201px;top:695.5px;font-size:8.5px;color:#f6f0dc;letter-spacing:-0.1px;">下午 07:27</span>
<span class="t" style="left:1201px;top:708px;font-size:8.5px;color:#f6f0dc;letter-spacing:-0.1px;">2017/4/14</span>
<svg style="left:1252px;top:697px" width="12" height="12" viewBox="0 0 12 12"><path d="M0.6 0.6 H11.4 V8.4 H5 L2.5 11 V8.4 H0.6Z" fill="#f4f0e0"/><path d="M2.5 3 H9.5 M2.5 5 H9.5" stroke="#9b7518" stroke-width="0.8"/></svg>
<svg style="left:1256px;top:705px" width="12" height="12" viewBox="0 0 12 12"><circle cx="6" cy="6" r="5.5" fill="#d6a93e" stroke="#9b7518" stroke-width="0.6"/><text x="6" y="9" font-size="8" fill="#fff" text-anchor="middle" font-family="Liberation Sans">8</text></svg>
<svg style="left:163px;top:76px" width="590" height="590" viewBox="163 76 590 590">
<g id="art">
<g fill="#0c0c0c">
<path d="M275 115 C283 115 290 119 300 125 L327 139 C334 143 337 149 336 154 C335 159 332 160 328 161 C323 162 321 167 316 168.5 L233 168.5 C228 167 226 162 221 161 C217 160 214.5 158 214.3 153 C214 148 217 143 223 140 L250 125 C260 119 267 115 275 115 Z"/>
<rect x="216" y="173" width="118" height="24" rx="10"/>
<rect x="261" y="165" width="27" height="50"/>
<path d="M228 200 C234 196 246 196 249 199 L254 213 L230 213 C224 211 224 203 228 200 Z"/>
<path d="M299 198 C305 196 314 196 320 200 C324 203 324 211 318 213 L294 213 Z"/>
<rect x="215" y="212" width="119" height="22" rx="10"/>
<rect x="228" y="252" width="24" height="120" rx="9"/>
<rect x="216" y="271" width="42" height="25" rx="11"/>
<rect x="216" y="306" width="42" height="24" rx="11"/>
<rect x="218" y="346" width="34" height="26" rx="10"/>
<rect x="260" y="267" width="73" height="104" rx="9"/>
<rect x="280" y="251" width="28" height="22" rx="9"/>
<rect x="216" y="389" width="37" height="15" rx="7"/>
<rect x="213" y="407" width="41" height="18" rx="8"/>
<rect x="217" y="429" width="36" height="14" rx="7"/>
<rect x="217" y="446" width="36" height="14" rx="7"/>
<rect x="215" y="464" width="39" height="44" rx="9"/>
<rect x="269" y="387" width="20" height="18" rx="8"/>
<path d="M256 406 Q256 397 265 397 L291 397 Q300 397 300 406 L300 500 Q300 509 291 509 L279 509 Q270 509 270 500 L270 494 L262 499 Q256 502 254 495 L254 482 L256 481 Z"/>
<rect x="312" y="387" width="21" height="122" rx="9"/>
<rect x="300" y="406" width="38" height="23" rx="10"/>
<rect x="302" y="484" width="31" height="25" rx="10"/>
<path d="M298 437 Q302 434 308 435 Q313 437 313 445 L313 458 L300 470 Z"/>
</g>
<g fill="#fff">
<path d="M274 138 L287 147 L262 147 Z"/>
<rect x="285" y="292" width="22" height="14" rx="3"/>
<rect x="285" y="327" width="22" height="20" rx="3"/>
<rect x="231" y="481" width="8" height="9" rx="2"/>
<rect x="275" y="413" width="6" height="5"/>
<rect x="275" y="431" width="6" height="4"/>
<rect x="275" y="448" width="6" height="4"/>
<path d="M254.5 471 L255 480 L270 470.5 Z"/>
</g>
<!-- hair -->
<path fill="#050505" d="M416 214 C418 200 424 186 432 170 L466 133 C500 118 560 100 593 100 C630 102 665 125 680 147 C683 155 680 158 676 162 C697 180 702 205 701 245 C699 275 690 300 678 322 C668 326 655 334 652 343 C650 352 648 358 641 358 C636 357 632 350 630 340 C626 330 620 318 617 308 C616 300 620 290 621 282 C617 265 610 248 607 233 L613 218 L606 214 C600 225 590 234 578 234 C540 232 500 224 475 219 C455 214 440 211 416 214 Z"/>
<path fill="#fff" d="M600 214 L612 214 L608 230 L604 236 Z"/>
<path fill="#fff" d="M674 156 L667 161 L662 162 L657 166 L651 168 L646 172 L640 174 L635 180 L633 184 L638 178 L644 176 L650 173 L655 171 L660 168 L666 166 L672 161 Z"/>
<!-- ears -->
<path fill="#f2cbbb" stroke="#0a0a0a" stroke-width="3.5" stroke-linejoin="round" d="M401 140 C412 126 445 124 467 152 L461 164 C450 172 435 176 422 179 C412 165 405 150 401 140 Z"/>
<path fill="none" stroke="#0a0a0a" stroke-width="3" d="M402 141 C430 142 450 148 466 157"/>
<path fill="#f2cbbb" d="M576 172 C580 160 600 152 617 154 C628 156 632 162 631 165 C628 180 620 198 613 207 C600 205 585 195 576 172 Z"/>
<path fill="none" stroke="#0a0a0a" stroke-width="1.8" d="M577 174 C590 166 605 160 619 157"/>
<!-- eye whites / iris -->
<defs>
<linearGradient id="iris" x1="0" y1="0" x2="0" y2="1">
<stop offset="0" stop-color="#0a0a0a"/><stop offset="0.45" stop-color="#1a1a1a"/><stop offset="1" stop-color="#8a8a8a"/>
</linearGradient>
</defs>
<path fill="#c9c9c9" d="M408 345 C412 338 418 334 424 333 L420 366 C414 360 410 352 408 345 Z"/>
<ellipse cx="431" cy="349" rx="12.5" ry="17.5" fill="url(#iris)"/>
<ellipse cx="426.5" cy="340" rx="4.5" ry="6.5" fill="#fff"/>
<circle cx="430" cy="348.5" r="1.4" fill="#fff"/>
<path fill="#cfcfcf" d="M490 352 C492 346 496 343 500 342 L497 375 C493 368 490 360 490 352 Z"/>
<path fill="#cfcfcf" d="M526 366 C530 368 534 374 536 384 L528 386 Z"/>
<ellipse cx="512" cy="364" rx="16.3" ry="22.5" fill="url(#iris)"/>
<ellipse cx="505.8" cy="356.7" rx="5.5" ry="8" fill="#fff"/>
<circle cx="512.5" cy="365.8" r="2.2" fill="#fff"/>
<g fill="none" stroke="#0d0d0d" stroke-linecap="round" stroke-linejoin="round">
<!-- face left outline -->
<path stroke-width="4.5" d="M418 214 C414 250 408 280 403 310"/>
<path stroke-width="3" d="M405 327 C400 350 396 380 394 400"/>
<path stroke-width="4.5" d="M394 405 C394 425 397 443 400 452 C404 465 408 473 415 480"/>
<!-- forehead wrinkles -->
<path stroke-width="2" d="M439 266 C470 270 500 275 522 280"/>
<path stroke-width="2" d="M445 278 C470 280 500 283 522 286"/>
<!-- wrinkle marks -->
<path stroke-width="2.2" d="M463 312 L455 322"/>
<path stroke-width="2.5" d="M487 317 L486 331"/>
<!-- eyebrows -->
<path stroke-width="8" d="M406 304 C420 305 438 306 449 307"/>
<path stroke-width="7" d="M506 314 C515 322 535 330 556 336"/>
<circle cx="563" cy="336" r="2" fill="#0d0d0d" stroke="none"/>
<!-- glasses left -->
<path stroke-width="5" d="M376 313 L403 295"/>
<path stroke-width="7" d="M377 314 C395 316 420 319 436 327 C446 333 452 337 460 339"/>
<path stroke-width="10" d="M457 338 L472 341"/>
<path stroke-width="4.5" d="M373 320 L373 334"/>
<path stroke-width="3" d="M377 340 C380 350 388 360 398 366 C408 371 420 372 432 372 C440 368 446 362 451 352 L453 343"/>
<path stroke-width="6" d="M449 352 C450 360 446 368 440 375"/>
<path stroke-width="4.5" d="M407 347 C410 339 416 333 425 329 C433 327 440 328 447 332"/>
<path stroke-width="1.8" d="M415 328 L428 326"/>
<path stroke-width="2" d="M403 362 C408 366 415 369 435 369"/>
<!-- glasses right -->
<path stroke-width="4" d="M480 340 C492 337 508 336 522 337 C540 339 555 345 566 358"/>
<path stroke-width="8" d="M566 358 C580 354 605 349 632 344"/>
<path stroke-width="4" d="M568 362 C569 370 566 380 558 391 L550 396 C535 396 518 393 505 390 C495 387 486 382 480 378"/>
<path stroke-width="4.5" d="M490 356 C494 348 500 343 510 342 C520 341 527 343 531 348"/>
<path stroke-width="4" d="M530 346 C534 353 537 363 540 378"/>
<path stroke-width="2" d="M513 388 C520 386 530 384 537 382"/>
<path stroke-width="2" d="M550 377 L558 382"/>
<path stroke-width="2" d="M550 385 L553 390"/>
<!-- nose -->
<path stroke-width="5" d="M477 348 C479 356 480 364 481 376"/>
<path stroke-width="5" d="M474 358 L476 367"/>
<path stroke-width="4" d="M481 378 C495 384 515 390 530 394"/>
<path stroke-width="3.5" d="M443 372 C436 378 430 386 427 400"/>
<path stroke-width="4.5" d="M423 402 C426 408 435 412 443 413 C450 415 453 421 458 420 C464 418 468 414 476 412 C483 411 488 414 492 413 C497 411 499 407 497 403 C494 401 488 401 483 402"/>
<path stroke-width="3.5" d="M478 385 C474 390 470 395 467 398"/>
<path stroke-width="3.5" d="M423 412 C422 418 422 424 422 430"/>
<path stroke-width="3.5" d="M502 410 C506 420 510 432 513 445"/>
<path stroke-width="3" d="M482 402 C490 402 497 404 500 413"/>
<path stroke-width="2.5" d="M421 421 L420 434"/>
<!-- mouth -->
<path stroke-width="4.5" d="M431 442 C434 446 436 449 452 451 C470 454 490 458 508 465"/>
<path stroke-width="4.5" d="M439 455 C442 459 446 463 455 465 C475 468 492 468 508 465"/>
<path stroke-width="4.5" d="M439 463 C442 470 446 477 456 480 C465 482 472 482 477 482"/>
<path stroke-width="4" d="M419 459 L421 469"/>
<path stroke-width="3.5" d="M526 467 L527 481"/>
<!-- jaw -->
<path stroke-width="4" d="M630 450 C626 460 614 472 600 486 C595 490 590 493 586 495 C566 508 546 517 524 524"/><path stroke-width="4.5" d="M527 511 C526 518 520 526 513 529 C508 532 503 535 497 533"/>

<!-- ear right -->
<path stroke-width="6" d="M676 324 C684 326 691 330 693 339 C693 350 692 360 690 368 C687 380 683 390 678 400 C672 412 664 424 655 434 C648 442 641 447 634 447 C628 446 627 440 629 434"/>
<path stroke-width="3" d="M633 421 L629 434"/>
<path stroke-width="4" d="M671 343 C664 350 657 360 650 375 C647 383 647 390 646 393 L640 403"/>
<path stroke-width="4" d="M656 368 C662 366 668 364 673 363"/>
<path stroke-width="2.2" d="M629 355 L633 372"/>
<path stroke-width="2.2" d="M636 355 L640 368"/>
<!-- whiskers -->
<path stroke-width="2.2" d="M338 400 C360 402 380 403 393 403"/>
<path stroke-width="2.2" d="M338 426 L401 420"/>
<path stroke-width="2.2" d="M340 450 L391 438"/>
<path stroke-width="2.2" d="M537 438 L644 438"/>
<path stroke-width="2.2" d="M552 456 L610 464"/>
<path stroke-width="2.2" d="M543 470 L641 500"/>
<path stroke-width="2.5" d="M569 415 C566 435 562 455 558 476"/>
<!-- hand -->
<path stroke-width="5" d="M403 488 C403 483 406 480 412 480.5 C425 482 440 487 456 496 C468 503 478 511 481 519 C482 524 478 526 472 523 C468 515 462 508 455 504 C440 497 425 494 412 492 C408 491 405 490 403 488"/>
<path stroke-width="5" d="M388 516 C389 505 392 498 399 493 L410 492"/>
<path stroke-width="5" d="M389 517 C394 511 405 508 419 507 C430 507 440 512 449 517 C456 521 466 527 470 531 C472 536 468 541 460 541"/>
<path stroke-width="4.5" d="M458 506 C464 512 467 518 466 526"/>
<path stroke-width="5" d="M382.5 532.5 C385 527 392 522 409 520 C420 520 430 525 437 528 C446 533 453 539 458 544 C462 549 461 553 456 555 C450 556 445 555 442 553"/>
<path stroke-width="5" d="M384 539 C390 537 400 535 416 534 C424 534 432 538 437 544 C440 548 442 553 442 559"/>
<path stroke-width="5" d="M384 549 C390 546 400 545 416 544 C422 545 427 549 430 556 C431 562 431 575 429 585 C426 589 420 588 415 583"/>
<path stroke-width="5" d="M378 537 C377 550 377 565 378 580 C379 600 382 615 387 624 C392 630 400 630 412 628 C418 626 422 624 422 622"/>
<path stroke-width="5" d="M422 622 C420 610 420 598 424 582"/>
<path stroke-width="5" d="M481 514 C488 518 494 526 497 534 C499 550 497 570 492 587 C487 600 480 615 470 628 C462 636 452 640 443 639 C432 638 425 632 422 624"/>
<path stroke-width="4" d="M409 565 C411 572 414 580 416 588 C417 595 417 602 417 610"/>

</g>
</g>
</svg>

</body></html>
